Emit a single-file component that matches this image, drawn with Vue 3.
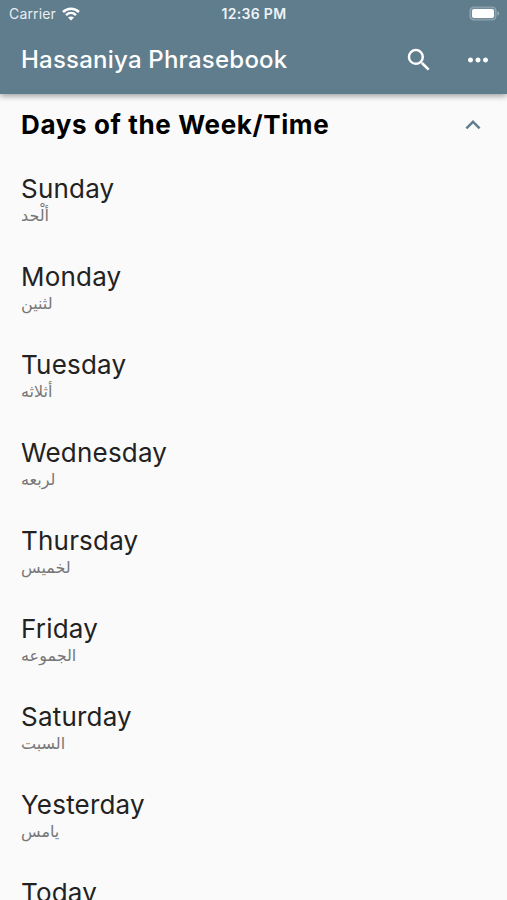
<script setup>
import {ref} from 'vue'

const open=ref(true)
const phrases=[
    {name:'Sunday',arabic:'ألْحد'},
    {name:'Monday',arabic:'لثنين'},
    {name:'Tuesday',arabic:'أثلاثه'},
    {name:'Wednesday',arabic:'لربعه'},
    {name:'Thursday',arabic:'لخميس'},
    {name:'Friday',arabic:'الجموعه'},
    {name:'Saturday',arabic:'السبت'},
    {name:'Yesterday',arabic:'يامس'},
    {name:'Today',arabic:''}
]
</script>
<template>
    <div class="screen">
        <header class="top">
            <div class="status">
                <div class="carrier">
                    <span>Carrier</span>
                    <svg width="18" height="14" viewBox="0 0 18 14" fill="none" stroke="#fff" stroke-width="2.5">
                        <path d="M1 5C5.6 .7 12.4 .7 17 5" />
                        <path d="M4 8.1C6.9 5.4 11.1 5.4 14 8.1" />
                        <path d="M9 13.6L6 10.6C7.7 9.1 10.3 9.1 12 10.6Z" fill="#fff" stroke="none" />
                    </svg>
                </div>
                <span class="clock">12:36 PM</span>
                <svg class="battery" width="31" height="15" viewBox="0 0 31 15">
                    <rect x="1" y="1" width="26" height="13" rx="4" fill="#fff" fill-opacity=".12" stroke="#fff" stroke-opacity=".3" stroke-width="1.2" />
                    <rect x="3" y="3" width="22" height="9" rx="2" fill="#fff" />
                    <path d="M28.5 5.3C30.6 6 30.6 9 28.5 9.7Z" fill="#fff" fill-opacity=".4" />
                </svg>
            </div>
            <div class="bar">
                <h1>Hassaniya Phrasebook</h1>
                <button class="search" aria-label="Search">
                    <svg width="30" height="30" viewBox="0 0 24 24" fill="#fff">
                        <path d="M15.5 14h-.79l-.28-.27A6.47 6.47 0 0 0 16 9.5 6.5 6.5 0 1 0 9.5 16c1.61 0 3.09-.59 4.23-1.57l.27.28v.79l5 4.99L20.49 19l-4.99-5zm-6 0C7.01 14 5 11.99 5 9.5S7.01 5 9.5 5 14 7.01 14 9.5 11.99 14 9.5 14z" />
                    </svg>
                </button>
                <button class="more" aria-label="More">
                    <svg width="30" height="30" viewBox="0 0 24 24" fill="#fff">
                        <path d="M6 10c-1.1 0-2 .9-2 2s.9 2 2 2 2-.9 2-2-.9-2-2-2zm12 0c-1.1 0-2 .9-2 2s.9 2 2 2 2-.9 2-2-.9-2-2-2zm-6 0c-1.1 0-2 .9-2 2s.9 2 2 2 2-.9 2-2-.9-2-2-2z" />
                    </svg>
                </button>
            </div>
        </header>
        <main>
            <div class="section" @click="open=!open">
                <h2>Days of the Week/Time</h2>
                <svg :class="{closed:!open}" width="30" height="30" viewBox="0 0 24 24" fill="#607d8d">
                    <path d="M12 8l-6 6 1.41 1.41L12 10.83l4.59 4.58L18 14z" />
                </svg>
            </div>
            <ul v-show="open">
                <li v-for="phrase in phrases" :key="phrase.name">
                    <p class="name">{{phrase.name}}</p>
                    <p v-if="phrase.arabic" class="arabic" lang="ar">{{phrase.arabic}}</p>
                </li>
            </ul>
        </main>
    </div>
</template>
<style>
body{
    background-color: #fafafa;
}
</style>
<style scoped>
.screen{
    display: flex;
    flex-direction: column;
    width: 100%;
    height: 100vh;
    overflow: hidden;
    background-color: #fafafa;
    font-family: Inter, "Liberation Sans", sans-serif;
}
h1,h2,p,ul{
    margin: 0;
    padding: 0;
}
.top{
    flex: none;
    height: 94px;
    background-color: #607d8d;
    color: #fff;
    box-shadow: 0 2px 6px rgba(0,0,0,.38);
    z-index: 1;
}
.status{
    display: grid;
    grid-template-columns: 1fr auto 1fr;
    align-items: center;
    height: 27px;
    padding: 0 7px 0 9px;
}
.carrier{
    display: flex;
    align-items: center;
    gap: 6px;
    font-size: 14px;
    letter-spacing: .15px;
    color: #e8eef1;
}
.clock{
    font-size: 14px;
    font-weight: 600;
    letter-spacing: .3px;
    margin-right: 1px;
    color: #edf3f6;
}
.battery{
    justify-self: end;
}
.bar{
    display: flex;
    align-items: center;
    height: 66px;
    padding: 0 14px 0 21px;
}
.bar h1{
    flex: 1;
    font-size: 24px;
    font-weight: 500;
    line-height: 30px;
    letter-spacing: .22px;
    white-space: nowrap;
}
.bar button{
    display: flex;
    padding: 0;
    border: none;
    background: none;
    cursor: pointer;
}
.bar .search{
    margin-right: 29px;
}
.section{
    display: flex;
    align-items: center;
    justify-content: space-between;
    height: 62px;
    padding: 0 19px 0 21px;
    cursor: pointer;
}
.section h2{
    padding-bottom: 1px;
    font-size: 26px;
    font-weight: 700;
    letter-spacing: .63px;
    color: #000;
    white-space: nowrap;
}
.section .closed{
    transform: rotate(180deg);
}
ul{
    list-style: none;
    padding-top: 16.5px;
}
li{
    height: 88px;
    padding-left: 21px;
}
.name{
    font-size: 26px;
    line-height: 32px;
    letter-spacing: .2px;
    color: #222;
}
.arabic{
    font-family: "DejaVu Sans", sans-serif;
    font-size: 16px;
    line-height: 21px;
    color: #777;
}
</style>
